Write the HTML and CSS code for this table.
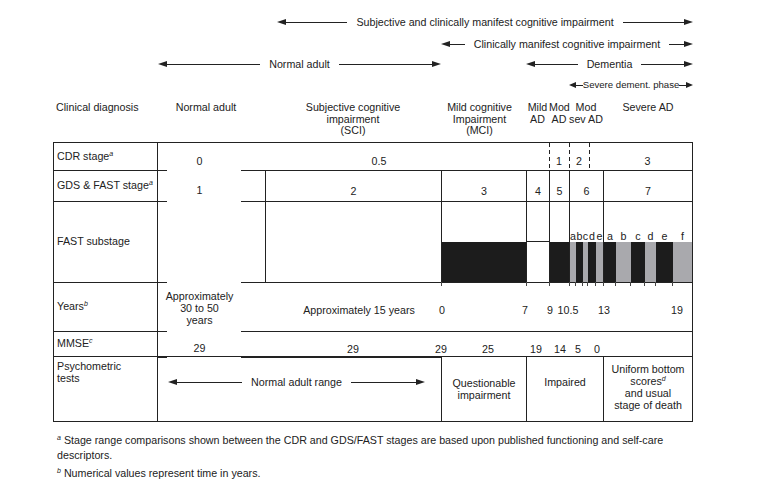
FILE: index.html
```html
<!DOCTYPE html>
<html lang="en">
<head>
<meta charset="utf-8">
<title>Stages of cognitive impairment</title>
<link rel="stylesheet" href="styles.css">
</head>
<body>
<div class="chart">
  <div class="arrow ar1"><span class="head l"></span><span class="shaft"></span><span class="txt">Subjective and clinically manifest cognitive impairment</span><span class="shaft"></span><span class="head r"></span></div>
  <div class="arrow ar2"><span class="head l"></span><span class="shaft"></span><span class="txt">Clinically manifest cognitive impairment</span><span class="shaft"></span><span class="head r"></span></div>
  <div class="arrow ar3n"><span class="head l"></span><span class="shaft"></span><span class="txt">Normal adult</span><span class="shaft"></span><span class="head r"></span></div>
  <div class="arrow ar3d"><span class="head l"></span><span class="shaft"></span><span class="txt">Dementia</span><span class="shaft"></span><span class="head r"></span></div>
  <div class="arrow ar4 small"><span class="head l"></span><span class="shaft"></span><span class="txt">Severe dement. phase</span><span class="shaft"></span><span class="head r"></span></div>

  <div class="hd h-label">Clinical diagnosis</div>
  <div class="hd h-normal">Normal adult</div>
  <div class="hd c-sci">Subjective cognitive<br>impairment<br>(SCI)</div>
  <div class="hd h-mci">Mild cognitive<br>Impairment<br>(MCI)</div>
  <div class="hd c-mild">Mild<br>AD</div>
  <div class="hd c-mod">Mod<br>AD</div>
  <div class="hd c-modsev">Mod<br>sev AD</div>
  <div class="hd c-sev">Severe AD</div>

  <div class="cell lab r1"><span>CDR stage<sup>a</sup></span></div>
  <div class="cell r1 c-norm low"><span>0</span></div>
  <div class="cell r1 c-cdr05 low"><span>0.5</span></div>
  <div class="cell r1 c-mod dash low"><span>1</span></div>
  <div class="cell r1 c-col9 dash low"><span>2</span></div>
  <div class="cell r1 c-cdr3 dash end low"><span>3</span></div>

  <div class="cell lab r2"><span>GDS &amp; FAST stage<sup>a</sup></span></div>
  <div class="cell r2 c-norm stub low"><span>1</span></div>
  <div class="cell r2 c-gap"></div>
  <div class="cell r2 c-sci vl low"><span>2</span></div>
  <div class="cell r2 c-mci vl low"><span>3</span></div>
  <div class="cell r2 c-mild vl low"><span>4</span></div>
  <div class="cell r2 c-mod vl low"><span>5</span></div>
  <div class="cell r2 c-modsev vl low"><span>6</span></div>
  <div class="cell r2 c-sev vl end low"><span>7</span></div>

  <div class="cell lab r3"><span>FAST substage</span></div>
  <div class="cell r3 c-norm stub"></div>
  <div class="cell r3 c-gap"></div>
  <div class="cell r3 c-sci vl"></div>
  <div class="cell r3 c-mci vl subs"><div class="seg k"></div></div>
  <div class="cell r3 c-mild vl subs"><div class="seg w"></div></div>
  <div class="cell r3 c-mod vl subs"><div class="seg k"></div></div>
  <div class="cell r3 c-modsev vl subs five">
    <div class="seg g"><span>a</span></div>
    <div class="seg k"><span>b</span></div>
    <div class="seg g"><span>c</span></div>
    <div class="seg k"><span>d</span></div>
    <div class="seg g"><span>e</span></div>
  </div>
  <div class="cell r3 c-sev vl end subs six">
    <div class="seg k"><span>a</span></div>
    <div class="seg g"><span>b</span></div>
    <div class="seg k"><span>c</span></div>
    <div class="seg g"><span>d</span></div>
    <div class="seg k"><span>e</span></div>
    <div class="seg g"><span>f</span></div>
  </div>

  <div class="cell lab r4"><span>Years<sup>b</sup></span></div>
  <div class="cell r4 c-norm stub years"><span>Approximately<br>30 to 50<br>years</span></div>
  <div class="cell r4 c-approx"><span>Approximately 15 years</span></div>
  <div class="cell r4 c-right end ticks yrs"><span>0</span><span>7</span><span>9</span><span>10.5</span><span>13</span><span>19</span></div>

  <div class="cell lab r5"><span>MMSE<sup>c</sup></span></div>
  <div class="cell r5 c-norm stub low"><span>29</span></div>
  <div class="cell r5 c-all end ticks mmse"><span>29</span><span>29</span><span>25</span><span>19</span><span>14</span><span>5</span><span>0</span></div>

  <div class="cell lab r6 top"><span>Psychometric<br>tests</span></div>
  <div class="cell r6 c-arrow">
    <div class="arrow"><span class="head l"></span><span class="shaft"></span><span class="txt">Normal adult range</span><span class="shaft"></span><span class="head r"></span></div>
  </div>
  <div class="cell r6 c-mci vl"><span>Questionable<br>impairment</span></div>
  <div class="cell r6 c-imp vl raise"><span>Impaired</span></div>
  <div class="cell r6 c-sev vl end uni"><span>Uniform bottom<br>scores<sup>d</sup><br>and usual<br>stage of death</span></div>
</div>

<div class="notes">
  <p><sup>a</sup> Stage range comparisons shown between the CDR and GDS/FAST stages are based upon published functioning and self-care<br>descriptors.</p>
  <p><sup>b</sup> Numerical values represent time in years.</p>
</div>
</body>
</html>
```

FILE: styles.css
```css
* { box-sizing: border-box; }

html, body {
  margin: 0;
  background: #fff;
}

body {
  font-family: "Liberation Sans", Arial, Helvetica, sans-serif;
  font-size: 10.7px;
  line-height: 12px;
  color: #222;
}

sup {
  font-size: 7px;
  font-style: italic;
  line-height: 0;
  vertical-align: 4px;
}

/* ---------- grid ---------- */
.chart {
  display: grid;
  grid-template-columns: 105px 9px 74px 24px 176px 85px 23px 20px 20px 14px 90px;
  grid-template-rows: 20px 24px 18px 22px 46px 28px 31px 81px 49px 25px 66px;
  padding: 12px 0 0 53px;
}

/* ---------- arrows ---------- */
.arrow {
  display: flex;
  align-items: center;
}
.shaft {
  flex: 1;
  height: 1px;
  background: #222;
}
.head {
  width: 0;
  height: 0;
  border-top: 3px solid transparent;
  border-bottom: 3px solid transparent;
}
.head.l { border-right: 9px solid #222; }
.head.r { border-left: 9px solid #222; }
.arrow .txt {
  padding: 0 9px;
  white-space: nowrap;
}
.arrow.small .txt {
  padding: 0;
  font-size: 9.6px;
}
.arrow.small .head.l { border-right-width: 7px; }
.arrow.small .head.r { border-left-width: 7px; }

.ar1 { grid-row: 1; grid-column: 5 / 12; margin-left: 12px; }
.ar2 { grid-row: 2; grid-column: 6 / 12; }
.ar3n { grid-row: 3; grid-column: 2 / 6; margin-top: -2px; }
.ar3d { grid-row: 3; grid-column: 7 / 12; margin-top: -2px; }
.ar4 { grid-row: 4; grid-column: 9 / 12; }

/* ---------- header ---------- */
.hd {
  grid-row: 5;
  align-self: start;
  padding-top: 6px;
  line-height: 11.5px;
  text-align: center;
  white-space: nowrap;
}
.h-label { grid-column: 1; text-align: left; padding-left: 3px; }
.h-normal { grid-column: 2 / 4; padding-left: 13px; }
.h-mci { grid-column: 6; padding-right: 8px; }

/* ---------- rows / columns ---------- */
.r1 { grid-row: 6; }
.r2 { grid-row: 7; }
.r3 { grid-row: 8; }
.r4 { grid-row: 9; }
.r5 { grid-row: 10; }
.r6 { grid-row: 11; border-bottom: 1px solid #222; }

.c-norm { grid-column: 2 / 4; }
.c-gap { grid-column: 4; }
.c-sci { grid-column: 5; }
.c-mci { grid-column: 6; }
.c-mild { grid-column: 7; }
.c-mod { grid-column: 8; }
.c-col9 { grid-column: 9; }
.c-modsev { grid-column: 9 / 11; }
.c-sev { grid-column: 11; }
.c-cdr05 { grid-column: 4 / 8; justify-content: flex-end; padding-right: 32px; }
.c-cdr3 { grid-column: 10 / 12; padding-left: 14px; }
.c-approx { grid-column: 4 / 6; padding: 6px 0 0 36px; }
.c-right { grid-column: 6 / 12; }
.c-all { grid-column: 4 / 12; }
.c-imp { grid-column: 7 / 11; }
.c-arrow {
  grid-column: 2 / 6;
  border-top: none;
  background:
    linear-gradient(#222, #222) 0 0 / 9px 1px no-repeat,
    linear-gradient(#222, #222) 83px 0 / calc(100% - 83px) 1px no-repeat;
  padding: 0 16px 14px 10px;
}
.c-arrow .arrow { flex: 1; }

/* ---------- cells ---------- */
.cell {
  display: flex;
  align-items: center;
  justify-content: center;
  text-align: center;
  border-top: 1px solid #222;
  white-space: nowrap;
}
.lab {
  grid-column: 1;
  justify-content: flex-start;
  text-align: left;
  padding: 0 0 2px 3px;
  border-left: 1px solid #222;
  border-right: 1px solid #222;
}
.lab.top { align-items: flex-start; padding-top: 3px; }
.end { border-right: 1px solid #222; }
.vl { border-left: 1px solid #222; }
.dash {
  background: repeating-linear-gradient(#222 0 4px, transparent 4px 7px) 0 0 / 1px 100% no-repeat;
}
.stub {
  border-top: none;
  background: linear-gradient(#222, #222) 0 0 / 9px 1px no-repeat;
}
.low { padding-top: 9px; }
.years { padding-top: 2px; }
.raise { padding-bottom: 14px; }
.uni { padding-bottom: 5px; }

/* ---------- FAST substage bars ---------- */
.subs {
  display: grid;
  grid-template-columns: 1fr;
  align-items: end;
}
.subs.five { grid-template-columns: 6px 7px 5px 8px 7px; }
.subs.six { grid-template-columns: 12px 15px 14px 11px 17px 19px; }
.seg {
  position: relative;
  display: flex;
  flex-direction: column;
  align-items: center;
  line-height: 11px;
}
.seg::after {
  content: "";
  align-self: stretch;
  height: 40px;
}
/* small scale tick below each segment boundary */
.seg::before {
  content: "";
  position: absolute;
  left: -1px;
  bottom: -4px;
  width: 1px;
  height: 4px;
  background: #444;
}
.seg.k::after { background: #1c1c1c; }
.seg.g::after { background: #a9a9ad; }
.seg.w::after { background: #fff; border-top: 1px solid #222; }

/* ---------- tick labels ---------- */
.ticks {
  display: grid;
  align-items: center;
  justify-items: start;
}
.ticks span { transform: translateX(-50%); }
.ticks.yrs {
  grid-template-columns: 83px 25px 18px 36px 73px 1fr;
  padding: 5px 0 0 1px;
}
.ticks.mmse {
  grid-template-columns: 88px 47px 48px 24px 18px 19px 1fr;
  padding: 9px 0 0 112px;
}

/* ---------- footnotes ---------- */
.notes {
  padding: 11px 0 0 57px;
  line-height: 15px;
}
.notes p {
  margin: 0 0 3px;
  white-space: nowrap;
}
```
